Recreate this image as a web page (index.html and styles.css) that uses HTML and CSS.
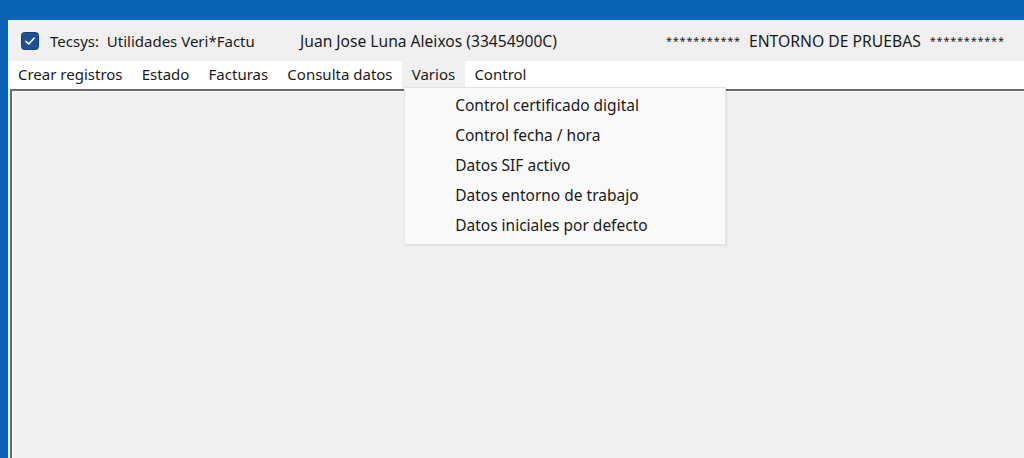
FILE: index.html
```html
<!DOCTYPE html>
<html lang="es">
<head>
  <meta charset="UTF-8">
  <title>Tecsys: Utilidades Veri*Factu</title>
  <link rel="stylesheet" href="styles.css">
</head>
<body>
  <div class="window">
    <div class="titlebar">
      <span class="check">
        <svg width="18" height="18" viewBox="0 0 18 18">
          <rect x="0.5" y="0.5" width="17" height="17" rx="3" fill="#1f4f94" stroke="#173d75"/>
          <path d="M5 9.3 L7.8 12 L13 6.2" fill="none" stroke="#fff" stroke-width="1.6" stroke-linecap="round" stroke-linejoin="round"/>
        </svg>
      </span>
      <span class="app-name">Tecsys:&nbsp; Utilidades Veri*Factu</span>
      <span class="user">Juan Jose Luna Aleixos (33454900C)</span>
      <span class="env"><span class="stars">***********</span>ENTORNO DE PRUEBAS<span class="stars">***********</span></span>
    </div>

    <div class="menubar">
      <div class="menu-item">Crear registros</div>
      <div class="menu-item">Estado</div>
      <div class="menu-item">Facturas</div>
      <div class="menu-item">Consulta datos</div>
      <div class="menu-item open">Varios
        <div class="dropdown">
          <div class="drop-item">Control certificado digital</div>
          <div class="drop-item">Control fecha / hora</div>
          <div class="drop-item">Datos SIF activo</div>
          <div class="drop-item">Datos entorno de trabajo</div>
          <div class="drop-item">Datos iniciales por defecto</div>
        </div>
      </div>
      <div class="menu-item">Control</div>
    </div>

    <div class="client"></div>
  </div>
</body>
</html>
```

FILE: styles.css
```css
body {
  margin: 0;
  height: 458px;
  overflow: hidden;
  background: #0a63b3;
  font-family: 'Noto Sans', 'Open Sans', sans-serif;
  font-size: 15px;
  color: #1a1a1a;
}

.window {
  margin: 20px 0 0 8px;
  height: 438px;
  background: #f0f0f0;
  display: flex;
  flex-direction: column;
}

.titlebar {
  height: 41px;
  display: flex;
  align-items: center;
  padding-left: 13px;
}

.check {
  width: 18px;
  height: 18px;
  margin-right: 11px;
  display: flex;
}

.app-name {
  width: 250px;
}

.user {
  width: 366px;
  font-size: 15.6px;
}

.env {
  font-size: 15.7px;
}

.env .stars {
  font-size: 11px;
  letter-spacing: 0.75px;
  position: relative;
  top: -2px;
  margin-right: 8px;
}

.env .stars:last-child {
  margin: 0 0 0 9px;
}

.menubar {
  height: 28px;
  background: #fff;
  display: flex;
  align-items: center;
  padding-left: 0.4px;
}

.menu-item {
  position: relative;
  padding: 0 9.6px;
  height: 28px;
  line-height: 27px;
}

.menu-item.open {
  background: #f0f0f0;
}

.dropdown {
  position: absolute;
  top: 26px;
  left: 2px;
  width: 320px;
  padding: 2px 0 4px;
  background: #f9f9f9;
  border: 1px solid #e3e3e3;
  box-shadow: 1px 1px 2px rgba(0, 0, 0, 0.08);
  font-size: 15.5px;
  z-index: 5;
}

.drop-item {
  height: 30px;
  line-height: 30px;
  padding-left: 50px;
  white-space: nowrap;
}

.client {
  flex: 1;
  margin-left: 2px;
  border-top: 2px solid #6b6b6b;
  border-left: 2px solid #6b6b6b;
  box-shadow: inset 1px 1px 0 #fafafa;
  background: #f0f0f0;
}
```
